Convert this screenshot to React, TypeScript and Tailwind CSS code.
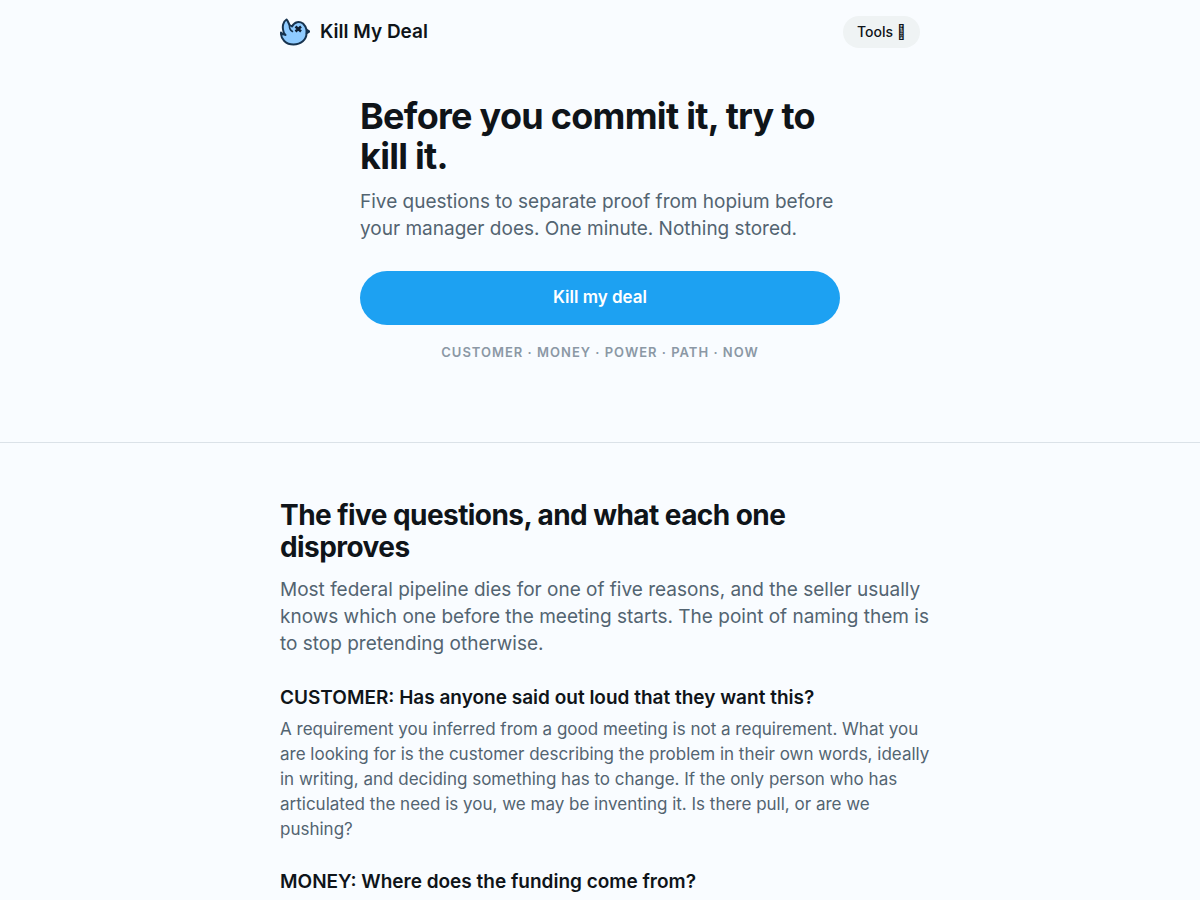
import React from 'react';

const questions = [
  {
    title: 'CUSTOMER: Has anyone said out loud that they want this?',
    body: 'A requirement you inferred from a good meeting is not a requirement. What you are looking for is the customer describing the problem in their own words, ideally in writing, and deciding something has to change. If the only person who has articulated the need is you, we may be inventing it. Is there pull, or are we pushing?',
  },
  {
    title: 'MONEY: Where does the funding come from?',
    body: '',
  },
];

const BirdLogo = () => (
  <svg width="30" height="30" viewBox="0 0 60 60" fill="none" aria-hidden="true">
    {/* Body and raised wing */}
    <path
      d="M7 29 C4 20 6 9 13 5 C16 8 17 12 19 16 L24 19 C29 9 39 8 46 13 C50 17 52 21 53 25 L59 29 L53 33 C53 45 42 55 27 55 C12 55 1 44 2 31 C4 34 7 36 11 36 C9 34 7 32 7 29 Z"
      fill="#8fcbff"
      stroke="#17334f"
      strokeWidth="4"
      strokeLinejoin="round"
    />
    <path d="M19 16 C18 22 20 26 25 29" stroke="#17334f" strokeWidth="3" strokeLinecap="round" />
    {/* Beak */}
    <path d="M52 25 L59 29 L52 33 Z" fill="#17334f" stroke="#17334f" strokeWidth="2" strokeLinejoin="round" />
    {/* Eye */}
    <path d="M31 19 L42 29 M42 19 L31 29" stroke="#0f1f33" strokeWidth="5" />
  </svg>
);

export default function App() {
  return (
    <div className="min-h-screen bg-[#f9fcff] font-['Inter',sans-serif] text-[#0f1419] antialiased">
      <header className="mx-auto flex h-16 w-full max-w-[640px] items-center justify-between">
        <a href="#" className="flex items-center gap-[10px]">
          <BirdLogo />
          <span className="text-[19px] font-semibold">Kill My Deal</span>
        </a>
        <button type="button" className="h-8 rounded-full bg-[#eff3f4] px-[14px] text-sm font-medium">
          Tools {'\uF8FF'}
        </button>
      </header>

      <main>
        <section className="mx-auto w-full max-w-[480px] pt-8 pb-20">
          <h1 className="text-4xl leading-10 font-bold tracking-[-0.02em]">Before you commit it, try to kill it.</h1>
          <p className="mt-3 text-[19px] leading-[27px] text-[#536471]">
            Five questions to separate proof from hopium before your manager does. One minute. Nothing stored.
          </p>
          <button type="button" className="mt-[29px] h-[54px] w-full rounded-full bg-[#1da1f2] text-[17px] font-semibold text-white">
            Kill my deal
          </button>
          <p className="mt-[17px] text-center text-[13px] leading-5 font-semibold tracking-[1px] text-[#8b98a5]">
            CUSTOMER · MONEY · POWER · PATH · NOW
          </p>
        </section>

        <section className="border-t border-[#dbe2e8] pt-14 pb-4">
          <div className="mx-auto w-full max-w-[640px]">
            <h2 className="text-[28px] leading-8 font-bold tracking-[-0.02em]">The five questions, and what each one disproves</h2>
            <p className="-mr-4 mt-[13px] text-[19px] leading-[27px] text-[#536471]">
              Most federal pipeline dies for one of five reasons, and the seller usually knows which one before the
              meeting starts. The point of naming them is to stop pretending otherwise.
            </p>
            <div className="mt-[29px] flex flex-col gap-7">
              {questions.map((q) => (
                <div key={q.title}>
                  <h3 className="text-[19px] leading-6 font-semibold">{q.title}</h3>
                  {q.body && <p className="-mr-4 mt-[7px] text-[17px] leading-[25px] text-[#536471]">{q.body}</p>}
                </div>
              ))}
            </div>
          </div>
        </section>
      </main>
    </div>
  );
}
